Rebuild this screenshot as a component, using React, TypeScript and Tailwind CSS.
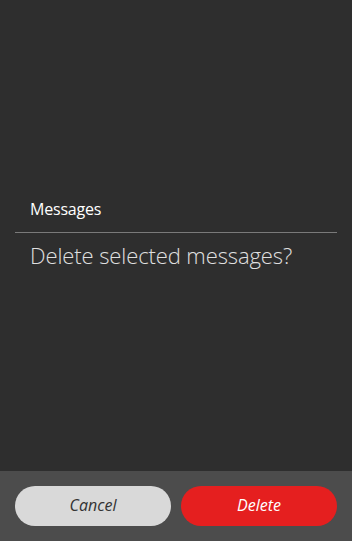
import React from "react";

export default function App() {
  return (
    <div
      className="w-[352px] h-[541px] flex flex-col bg-[#2e2e2e] overflow-hidden"
      style={{ fontFamily: '"Open Sans", "Noto Sans", sans-serif' }}
    >
      <div className="flex-1 flex flex-col justify-end">
        <div className="h-[276px] flex flex-col">
          <div className="mx-[15px] h-[38px] flex items-start pt-[5px] px-[15px] border-b border-[#7a7a7a]">
            <span className="text-[16px] font-medium text-white leading-[18px] tracking-[-0.2px]">Messages</span>
          </div>
          <div className="px-[30px] pt-[7px]">
            <p className="text-[22px] font-light text-[#e0e0e0] leading-[30px] tracking-[-0.1px]">Delete selected messages?</p>
          </div>
        </div>
      </div>
      <div className="h-[70px] bg-[#4c4c4c] flex items-center gap-[10px] px-[15px]">
        <button className="flex-1 h-[40px] rounded-full bg-[#d9d9d9] text-[#333] italic text-[16px] leading-[20px] pb-[2px]">
          Cancel
        </button>
        <button className="flex-1 h-[40px] rounded-full bg-[#e51f1f] text-white italic text-[16px] leading-[20px] pb-[2px]">
          Delete
        </button>
      </div>
    </div>
  );
}
